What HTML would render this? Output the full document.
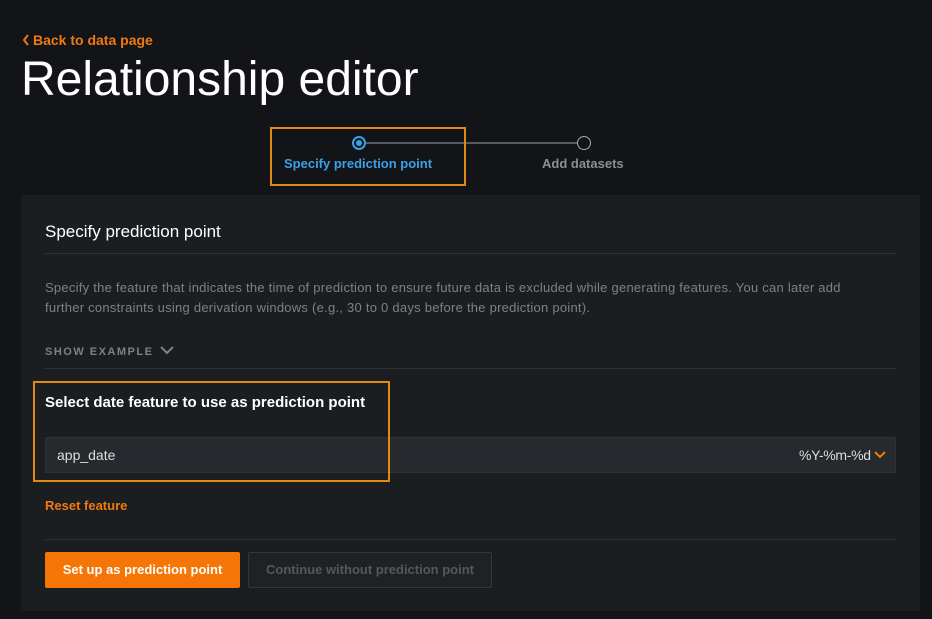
<!DOCTYPE html>
<html><head><meta charset="utf-8"><style>
*{margin:0;padding:0;box-sizing:border-box}
body{width:932px;height:619px;background:#121417;font-family:"Liberation Sans",sans-serif;position:relative;overflow:hidden;color:#fff}
.a{position:absolute;white-space:nowrap}
</style></head><body>
<div class="a" style="left:22px;top:32px;font-size:14px;font-weight:bold;color:#f07a10"><svg width="8" height="12" style="vertical-align:-1px;margin-right:3px"><path d="M6 1 L2 6 L6 11" stroke="#f07a10" stroke-width="2" fill="none"/></svg>Back to data page</div>
<div class="a" style="left:21px;top:52px;font-size:48px;color:#fff">Relationship editor</div>
<div class="a" style="left:366px;top:142px;width:212px;height:2px;background:#555a5f"></div>
<div class="a" style="left:352px;top:136px;width:14px;height:14px;border:2px solid #3ba0e6;border-radius:50%"></div>
<div class="a" style="left:356px;top:140px;width:6px;height:6px;background:#3ba0e6;border-radius:50%"></div>
<div class="a" style="left:577px;top:136px;width:14px;height:14px;border:1.5px solid #aaa;border-radius:50%"></div>
<div class="a" style="left:284px;top:156px;font-size:13px;font-weight:bold;color:#3ba0e6">Specify prediction point</div>
<div class="a" style="left:542px;top:156px;font-size:13px;font-weight:bold;color:#8a8f94">Add datasets</div>
<div class="a" style="left:270px;top:127px;width:196px;height:59px;border:2px solid #e08a14"></div>
<div class="a" style="left:21px;top:195px;width:899px;height:416px;background:#1b1e21"></div>
<div class="a" style="left:45px;top:222px;font-size:17px;color:#fff">Specify prediction point</div>
<div class="a" style="left:45px;top:253px;width:851px;height:1px;background:#2e3236"></div>
<div class="a" style="left:45px;top:278px;font-size:13px;line-height:20px;color:#7c8186;white-space:normal;width:830px;letter-spacing:0.25px">Specify the feature that indicates the time of prediction to ensure future data is excluded while generating features. You can later add further constraints using derivation windows (e.g., 30 to 0 days before the prediction point).</div>
<div class="a" style="left:45px;top:345px;font-size:11px;font-weight:bold;letter-spacing:1.5px;color:#7c8186">SHOW EXAMPLE <svg width="14" height="10" style="margin-left:2px"><path d="M1 2 L7 8 L13 2" stroke="#7c8186" stroke-width="2" fill="none"/></svg></div>
<div class="a" style="left:45px;top:368px;width:851px;height:1px;background:#2e3236"></div>
<div class="a" style="left:45px;top:394px;font-size:15px;font-weight:bold;color:#fff">Select date feature to use as prediction point</div>
<div class="a" style="left:45px;top:437px;width:851px;height:36px;background:#26292d;border:1px solid #2f3337"></div>
<div class="a" style="left:57px;top:447px;font-size:14px;color:#ddd">app_date</div>
<div class="a" style="left:799px;top:447px;font-size:14px;color:#ddd;letter-spacing:-0.3px">%Y-%m-%d</div>
<svg class="a" style="left:874px;top:451px" width="12" height="8"><path d="M1 1 L6 6 L11 1" stroke="#f07a10" stroke-width="2" fill="none"/></svg>
<div class="a" style="left:33px;top:381px;width:357px;height:101px;border:2px solid #e08a14"></div>
<div class="a" style="left:45px;top:498px;font-size:13px;font-weight:bold;color:#f07a10">Reset feature</div>
<div class="a" style="left:45px;top:539px;width:851px;height:1px;background:#2e3236"></div>
<div class="a" style="left:45px;top:552px;width:195px;height:36px;background:#f57606;border-radius:2px;font-size:13px;font-weight:bold;color:#fff;text-align:center;line-height:36px">Set up as prediction point</div>
<div class="a" style="left:248px;top:552px;width:244px;height:36px;background:#1f2225;border:1px solid #33373b;border-radius:2px;font-size:13px;font-weight:bold;color:#53585d;text-align:center;line-height:34px">Continue without prediction point</div>
</body></html>
